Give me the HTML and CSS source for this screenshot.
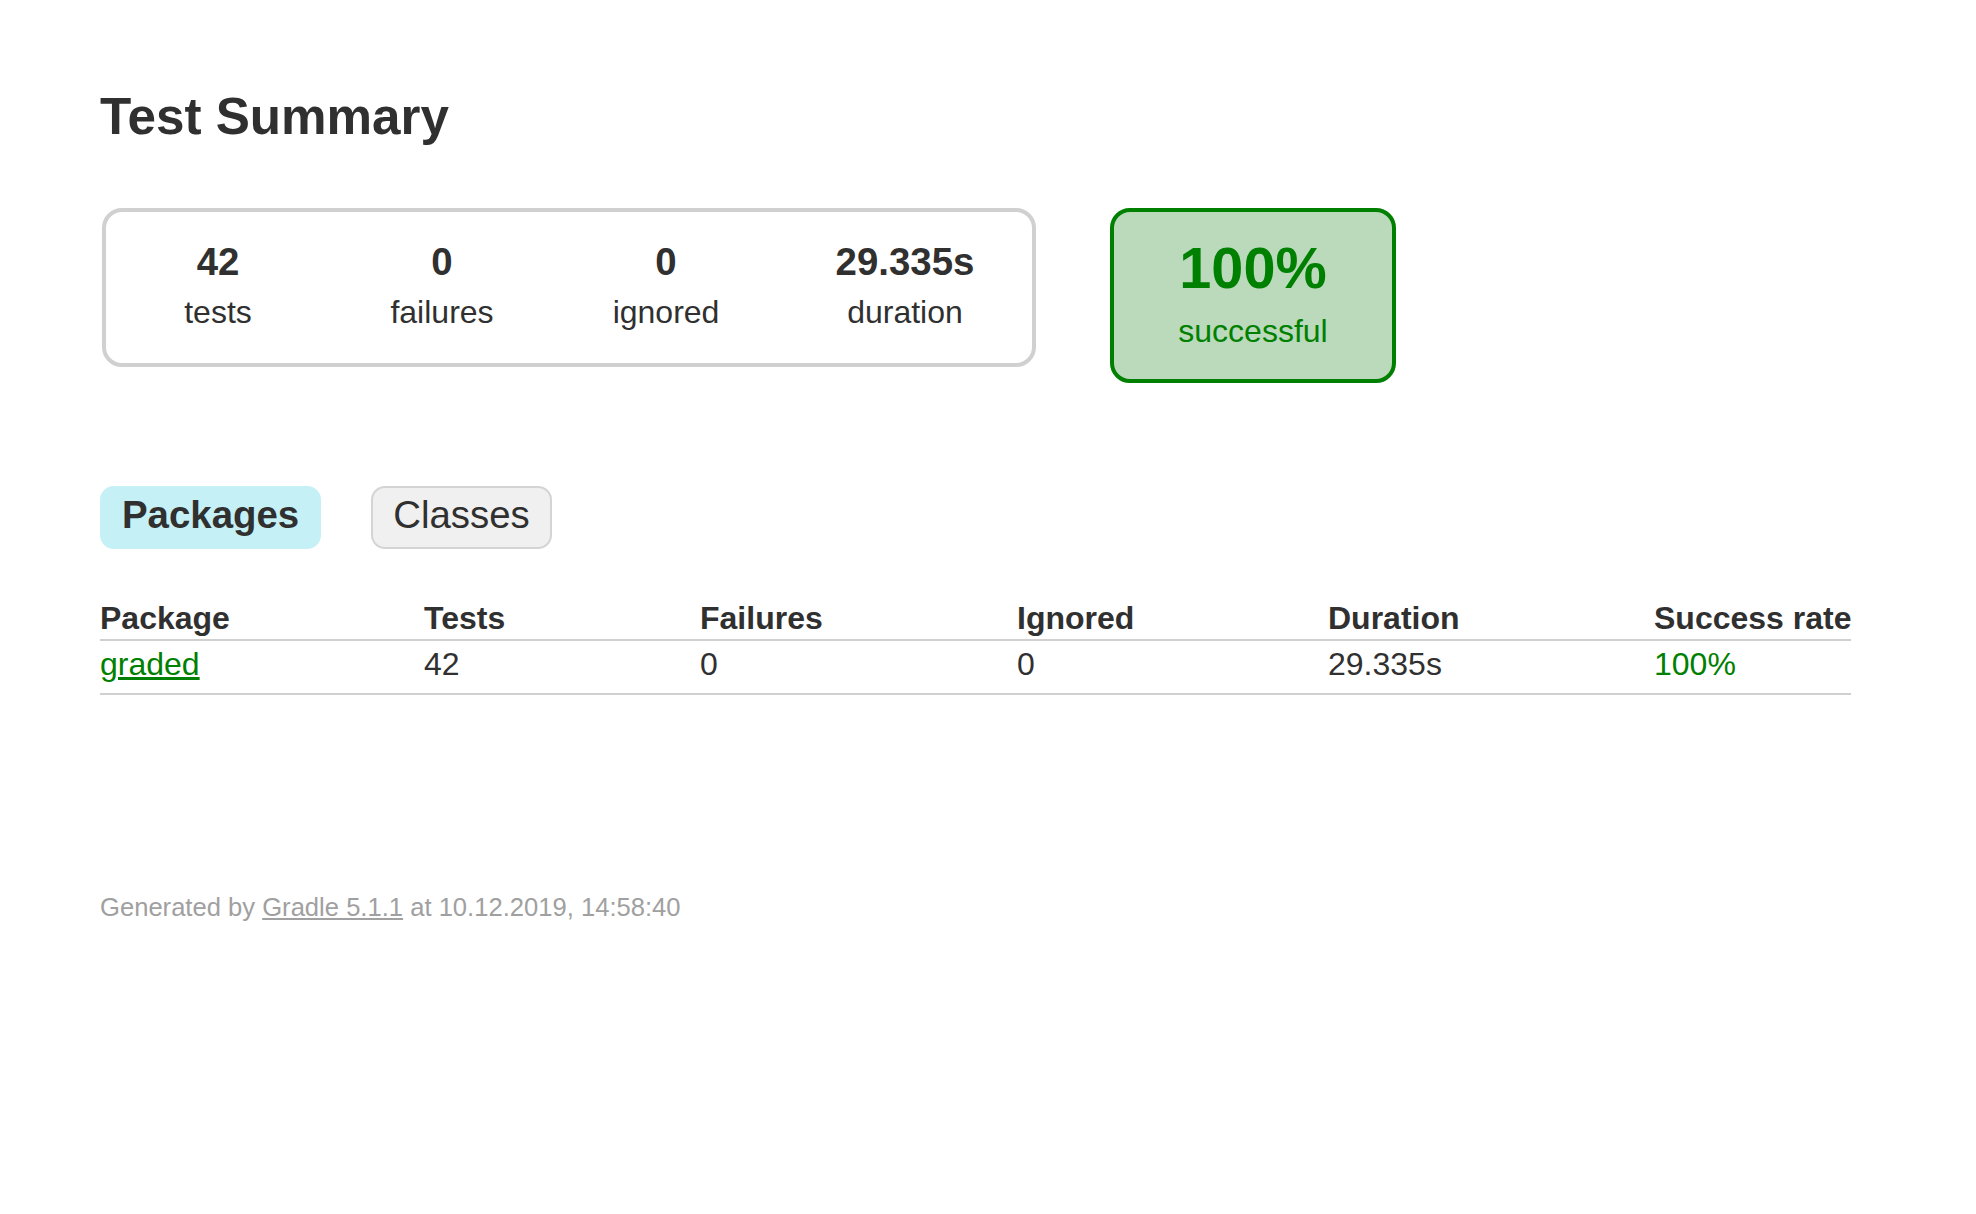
FILE: index.html
```html
<!DOCTYPE html>
<html lang="en">
<head>
<meta charset="utf-8">
<title>Test results - Test Summary</title>
<link rel="stylesheet" href="styles.css">
</head>
<body>
<div class="content">
  <h1 class="title">Test Summary</h1>
  <div class="summary">
    <div class="summary-group">
      <div class="info-cell">
        <div class="info-box">
          <div class="counter">42</div>
          <p class="info-label">tests</p>
        </div>
      </div>
      <div class="info-cell">
        <div class="info-box">
          <div class="counter">0</div>
          <p class="info-label">failures</p>
        </div>
      </div>
      <div class="info-cell">
        <div class="info-box">
          <div class="counter">0</div>
          <p class="info-label">ignored</p>
        </div>
      </div>
      <div class="info-cell">
        <div class="info-box duration">
          <div class="counter">29.335s</div>
          <p class="info-label">duration</p>
        </div>
      </div>
    </div>
    <div class="success-rate">
      <div class="percent">100%</div>
      <p class="success-label">successful</p>
    </div>
  </div>

  <ul class="tab-links">
    <li class="tab-link selected"><a href="#tab0">Packages</a></li>
    <li class="tab-link"><a href="#tab1">Classes</a></li>
  </ul>

  <table class="results">
    <colgroup>
      <col class="col-package">
      <col class="col-tests">
      <col class="col-failures">
      <col class="col-ignored">
      <col class="col-duration">
      <col class="col-rate">
    </colgroup>
    <thead>
      <tr>
        <th>Package</th>
        <th>Tests</th>
        <th>Failures</th>
        <th>Ignored</th>
        <th>Duration</th>
        <th>Success rate</th>
      </tr>
    </thead>
    <tbody>
      <tr>
        <td class="success"><a href="#graded">graded</a></td>
        <td>42</td>
        <td>0</td>
        <td>0</td>
        <td>29.335s</td>
        <td class="success">100%</td>
      </tr>
    </tbody>
  </table>

  <div class="footer">Generated by <a href="#gradle">Gradle 5.1.1</a> at 10.12.2019, 14:58:40</div>
</div>
</body>
</html>
```

FILE: styles.css
```css
html, body {
  margin: 0;
  padding: 0;
  background: #ffffff;
}

body {
  font-family: "Liberation Sans", Arial, Helvetica, sans-serif;
  font-size: 32px;
  color: #303030;
}

a {
  color: #303030;
}

.content {
  padding: 60px 100px 60px 100px;
}

.title {
  font-size: 51.2px;
  line-height: 59px;
  font-weight: bold;
  margin: 27px 0 0 0;
  white-space: nowrap;
}

.summary {
  margin-top: 62px;
  margin-left: 2px;
  display: flex;
  align-items: flex-start;
  gap: 74px;
}

.summary-group {
  display: flex;
  border: solid 4px #d0d0d0;
  border-radius: 20px;
}

.info-cell {
  padding: 2px;
}

.info-box {
  width: 220px;
  padding: 28px 0;
  text-align: center;
}

.info-box.duration {
  width: 250px;
}

.counter {
  font-size: 38.4px;
  line-height: 40px;
  font-weight: bold;
  margin-bottom: 10px;
}

.info-label {
  margin: 0;
  line-height: 41px;
}

.success-rate {
  width: 278px;
  padding: 28px 0;
  text-align: center;
  border: solid 4px #008000;
  border-radius: 20px;
  background-color: #bbd9bb;
  color: #008000;
}

.percent {
  font-size: 57.6px;
  line-height: 56px;
  font-weight: bold;
  margin-bottom: 15px;
}

.success-label {
  margin: 0;
  line-height: 40px;
}

.tab-links {
  list-style: none;
  margin: 103px 0 0 0;
  padding: 0;
  display: flex;
  gap: 50px;
}

.tab-link {
  padding: 7px 20px 13px 20px;
  border: solid 2px #d4d4d4;
  border-radius: 14px;
  background-color: #f0f0f0;
}

.tab-link a {
  display: block;
  font-size: 38.4px;
  line-height: 39px;
  text-decoration: none;
  color: #303030;
}

.tab-link.selected {
  background-color: #c5f0f5;
  border-color: #c5f0f5;
}

.tab-link.selected a {
  font-weight: bold;
}

.results {
  margin-top: 52px;
  border-collapse: collapse;
  border-bottom: solid 2px #d0d0d0;
}

.col-package { width: 324px; }
.col-tests { width: 276px; }
.col-failures { width: 317px; }
.col-ignored { width: 311px; }
.col-duration { width: 326px; }

.results th {
  text-align: left;
  white-space: nowrap;
  font-weight: bold;
  line-height: 34px;
  padding: 0 0 4px 0;
  border-bottom: solid 2px #d0d0d0;
}

.results td {
  white-space: nowrap;
  line-height: 37px;
  padding: 5px 0 10px 0;
}

.success,
.success a {
  color: #008000;
}

.footer {
  margin-top: 198px;
  font-size: 25.6px;
  line-height: 29px;
  white-space: nowrap;
  color: #a0a0a0;
}

.footer a {
  color: #a0a0a0;
}
```
